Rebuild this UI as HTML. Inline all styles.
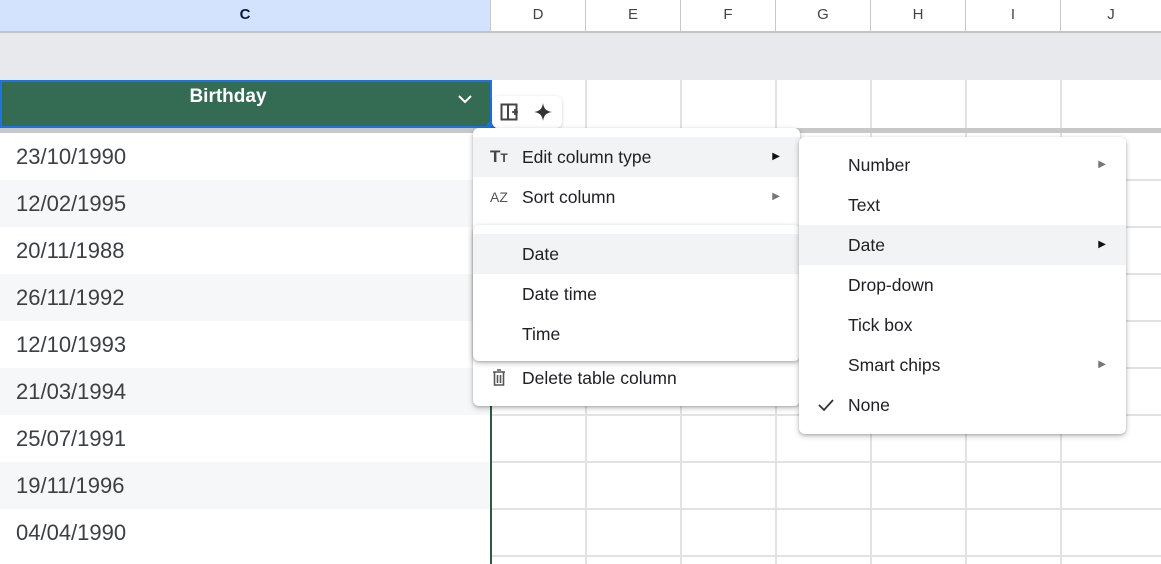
<!DOCTYPE html>
<html><head><style>
*{margin:0;padding:0;box-sizing:border-box}
html,body{width:1161px;height:564px;overflow:hidden}
body{background:#fff;font-family:"Liberation Sans",Arial,sans-serif;position:relative}
.a{position:absolute}
.hdr{top:0;height:33px;border-right:1px solid #c7c7c7;border-bottom:2px solid #c4c4c4;font-size:15px;color:#444;text-align:center;line-height:30px}
.row{left:0;width:490px;height:47px;font-size:22px;color:#3c4043;padding-left:16px;line-height:47px}
.vl{width:2px;background:#e2e2e2}
.hl{height:2px;background:#e2e2e2;left:491px;width:670px}
.menu{background:#fff;border-radius:6px;box-shadow:0 2px 6px rgba(0,0,0,.25),0 1px 2px rgba(0,0,0,.15)}
.it{position:absolute;left:0;right:0;height:40px;line-height:40px;font-size:17.5px;color:#202124;padding-left:49px}
.hi{background:#f1f3f4}
.arr{position:absolute;right:20px;top:0;font-size:10px;color:#777}
</style></head><body>
<div class="a hdr" style="left:0;width:491px;background:#d3e3fd;color:#0b1b3d;font-weight:bold">C</div>
<div class="a hdr" style="left:491px;width:95px">D</div>
<div class="a hdr" style="left:586px;width:95px">E</div>
<div class="a hdr" style="left:681px;width:95px">F</div>
<div class="a hdr" style="left:776px;width:95px">G</div>
<div class="a hdr" style="left:871px;width:95px">H</div>
<div class="a hdr" style="left:966px;width:95px">I</div>
<div class="a hdr" style="left:1061px;width:100px;border-right:none">J</div>
<div class="a" style="left:0;top:33px;width:1161px;height:47px;background:#e8e9ed"></div>
<div class="a vl" style="left:585px;top:80px;height:484px"></div>
<div class="a vl" style="left:680px;top:80px;height:484px"></div>
<div class="a vl" style="left:775px;top:80px;height:484px"></div>
<div class="a vl" style="left:870px;top:80px;height:484px"></div>
<div class="a vl" style="left:965px;top:80px;height:484px"></div>
<div class="a vl" style="left:1060px;top:80px;height:484px"></div>
<div class="a hl" style="top:179px"></div><div class="a hl" style="top:226px"></div><div class="a hl" style="top:273px"></div><div class="a hl" style="top:320px"></div><div class="a hl" style="top:367px"></div><div class="a hl" style="top:414px"></div><div class="a hl" style="top:461px"></div><div class="a hl" style="top:508px"></div><div class="a hl" style="top:555px"></div>
<div class="a" style="left:0;top:128px;width:1161px;height:5px;background:#c8c8c8"></div>
<div class="a" style="left:0;top:80px;width:492px;height:48px;background:#336b53;border:2px solid #1a73e8;color:#fff;font-weight:bold;font-size:19px;text-align:center;line-height:30px"><span style="position:relative;left:-18px">Birthday</span>
<svg class="a" style="left:455px;top:11px" width="16" height="12" viewBox="0 0 16 12"><path d="M2 3l6 6 6-6" stroke="#fff" stroke-width="2" fill="none"/></svg></div>
<div class="a" style="left:487px;top:121px;width:9px;height:9px;border-radius:50%;background:#1a73e8"></div>
<div class="a" style="left:492px;top:96px;width:70px;height:32px;background:#fff;border-radius:6px;box-shadow:0 1px 3px rgba(0,0,0,.2)">
<svg class="a" style="left:8px;top:7px" width="20" height="18" viewBox="0 0 20 18"><rect x="1.5" y="1.5" width="15" height="15" fill="none" stroke="#444" stroke-width="2"/><line x1="8" y1="1" x2="8" y2="17" stroke="#444" stroke-width="2"/><path d="M12 9h6M15 6v6" stroke="#444" stroke-width="1.8"/></svg>
<svg class="a" style="left:41px;top:6px" width="20" height="20" viewBox="0 0 20 20"><path d="M10 1C11 7 13 9 19 10C13 11 11 13 10 19C9 13 7 11 1 10C7 9 9 7 10 1Z" fill="#333"/></svg></div>
<div class="a row" style="top:133px">23/10/1990</div>
<div class="a row" style="top:180px;background:#f6f7f9">12/02/1995</div>
<div class="a row" style="top:227px">20/11/1988</div>
<div class="a row" style="top:274px;background:#f6f7f9">26/11/1992</div>
<div class="a row" style="top:321px">12/10/1993</div>
<div class="a row" style="top:368px;background:#f6f7f9">21/03/1994</div>
<div class="a row" style="top:415px">25/07/1991</div>
<div class="a row" style="top:462px;background:#f6f7f9">19/11/1996</div>
<div class="a row" style="top:509px">04/04/1990</div>
<div class="a" style="left:490px;top:128px;width:2px;height:436px;background:#2d5a45"></div>
<div class="a menu" style="left:473px;top:128px;width:327px;height:278px">
<div class="it hi" style="top:9px"><span class="a" style="left:17px;font-weight:bold;font-size:17px;color:#444">T<span style="font-size:12px">T</span></span>Edit column type<span class="arr" style="color:#111">&#9654;</span></div>
<div class="it" style="top:49px"><span class="a" style="left:17px;font-size:14px;color:#555">A<span>Z</span></span>Sort column<span class="arr">&#9654;</span></div>
<div class="it" style="top:230px"><svg class="a" style="left:19px;top:11px" width="14" height="18" viewBox="0 0 14 18"><path d="M1 3h12M5 1h4M2.5 3v13h9V3M5.5 6v8M8.5 6v8" stroke="#555" stroke-width="1.6" fill="none"/></svg>Delete table column</div>
</div>
<div class="a menu" style="left:473px;top:225px;width:327px;height:136px">
<div class="it hi" style="top:9px">Date</div>
<div class="it" style="top:49px">Date time</div>
<div class="it" style="top:89px">Time</div>
</div>
<div class="a menu" style="left:799px;top:137px;width:327px;height:297px">
<div class="it" style="top:8px">Number<span class="arr">&#9654;</span></div>
<div class="it" style="top:48px">Text</div>
<div class="it hi" style="top:88px">Date<span class="arr" style="color:#111">&#9654;</span></div>
<div class="it" style="top:128px">Drop-down</div>
<div class="it" style="top:168px">Tick box</div>
<div class="it" style="top:208px">Smart chips<span class="arr">&#9654;</span></div>
<div class="it" style="top:248px"><svg class="a" style="left:18px;top:13px" width="18" height="14" viewBox="0 0 18 14"><path d="M2 7l5 5L16 2" stroke="#333" stroke-width="1.8" fill="none"/></svg>None</div>
</div>
</body></html>
